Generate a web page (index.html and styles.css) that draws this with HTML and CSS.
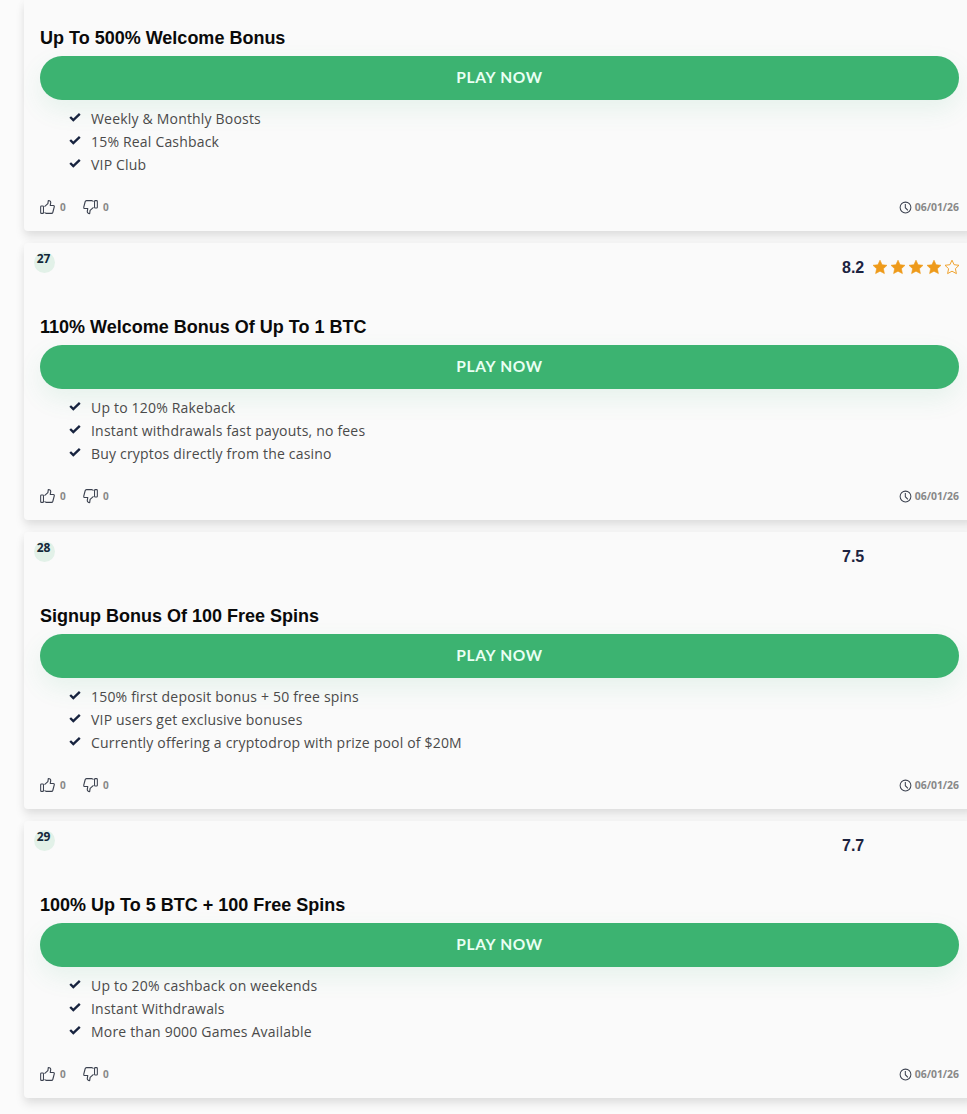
FILE: index.html
```html
<!DOCTYPE html>
<html lang="en">
<head>
<meta charset="utf-8">
<title>Casino list</title>
<link rel="stylesheet" href="styles.css">
</head>
<body>
<svg class="defs" width="0" height="0" aria-hidden="true">
  <defs>
    <symbol id="check" viewBox="0 0 12 10"><path d="M1.200 5 4.300 8 10.800 1.800" fill="none" stroke="currentColor" stroke-width="2.400"/></symbol>
    <symbol id="thumb" viewBox="0 0 16 16"><rect x="0.700" y="7" width="3" height="7.800" rx="0.800" fill="none" stroke="currentColor" stroke-width="1.100"/><path d="M4.800 7.600 8.400 4.400 8.900 1c1.700 0 2.700 1.100 2.500 2.700L10.900 6.400h3.300c.8 0 1.200.7 1 1.400l-1.500 5.800c-.2.700-.7 1.200-1.400 1.200H6.400l-1.600-.9" fill="none" stroke="currentColor" stroke-width="1.200" stroke-linejoin="round"/></symbol>
    <symbol id="clock" viewBox="0 0 14 14"><circle cx="7" cy="7" r="5.800" fill="none" stroke="currentColor" stroke-width="1.100"/><path d="M6.800 3.200V7.200L9.600 10" fill="none" stroke="currentColor" stroke-width="1.100"/></symbol>
    <symbol id="star" viewBox="0 0 16 16"><path d="M8 1.200l2.100 4.500 4.900.6-3.600 3.400 1 4.900L8 12.200l-4.400 2.400 1-4.900L1 6.300l4.900-.6z"/></symbol>
  </defs>
</svg>
<main class="list">
  <article class="card card-cut">
    <h2 class="title">Up To 500% Welcome Bonus</h2>
    <a class="play" href="#">PLAY NOW</a>
    <ul class="perks">
      <li><svg class="check"><use href="#check"/></svg>Weekly &amp; Monthly Boosts</li>
      <li><svg class="check"><use href="#check"/></svg>15% Real Cashback</li>
      <li><svg class="check"><use href="#check"/></svg>VIP Club</li>
    </ul>
    <footer class="foot">
      <span class="vote"><svg class="thumb"><use href="#thumb"/></svg>0</span>
      <span class="vote"><svg class="thumb down"><use href="#thumb"/></svg>0</span>
      <span class="date"><svg class="clock"><use href="#clock"/></svg>06/01/26</span>
    </footer>
  </article>
  <article class="card">
    <header class="head">
      <span class="rank">27</span>
      <div class="rating"><span class="score">8.2</span>
        <span class="stars">
          <svg class="star"><use href="#star"/></svg><svg class="star"><use href="#star"/></svg><svg class="star"><use href="#star"/></svg><svg class="star"><use href="#star"/></svg><svg class="star empty"><use href="#star"/></svg>
        </span>
      </div>
    </header>
    <h2 class="title">110% Welcome Bonus Of Up To 1 BTC</h2>
    <a class="play" href="#">PLAY NOW</a>
    <ul class="perks">
      <li><svg class="check"><use href="#check"/></svg>Up to 120% Rakeback</li>
      <li><svg class="check"><use href="#check"/></svg>Instant withdrawals fast payouts, no fees</li>
      <li><svg class="check"><use href="#check"/></svg>Buy cryptos directly from the casino</li>
    </ul>
    <footer class="foot">
      <span class="vote"><svg class="thumb"><use href="#thumb"/></svg>0</span>
      <span class="vote"><svg class="thumb down"><use href="#thumb"/></svg>0</span>
      <span class="date"><svg class="clock"><use href="#clock"/></svg>06/01/26</span>
    </footer>
  </article>
  <article class="card">
    <header class="head">
      <span class="rank">28</span>
      <div class="rating"><span class="score">7.5</span><span class="stars"></span></div>
    </header>
    <h2 class="title">Signup Bonus Of 100 Free Spins</h2>
    <a class="play" href="#">PLAY NOW</a>
    <ul class="perks">
      <li><svg class="check"><use href="#check"/></svg>150% first deposit bonus + 50 free spins</li>
      <li><svg class="check"><use href="#check"/></svg>VIP users get exclusive bonuses</li>
      <li><svg class="check"><use href="#check"/></svg>Currently offering a cryptodrop with prize pool of $20M</li>
    </ul>
    <footer class="foot">
      <span class="vote"><svg class="thumb"><use href="#thumb"/></svg>0</span>
      <span class="vote"><svg class="thumb down"><use href="#thumb"/></svg>0</span>
      <span class="date"><svg class="clock"><use href="#clock"/></svg>06/01/26</span>
    </footer>
  </article>
  <article class="card">
    <header class="head">
      <span class="rank">29</span>
      <div class="rating"><span class="score">7.7</span><span class="stars"></span></div>
    </header>
    <h2 class="title">100% Up To 5 BTC + 100 Free Spins</h2>
    <a class="play" href="#">PLAY NOW</a>
    <ul class="perks">
      <li><svg class="check"><use href="#check"/></svg>Up to 20% cashback on weekends</li>
      <li><svg class="check"><use href="#check"/></svg>Instant Withdrawals</li>
      <li><svg class="check"><use href="#check"/></svg>More than 9000 Games Available</li>
    </ul>
    <footer class="foot">
      <span class="vote"><svg class="thumb"><use href="#thumb"/></svg>0</span>
      <span class="vote"><svg class="thumb down"><use href="#thumb"/></svg>0</span>
      <span class="date"><svg class="clock"><use href="#clock"/></svg>06/01/26</span>
    </footer>
  </article>
</main>
</body>
</html>
```
FILE: styles.css
```css
* { box-sizing: border-box; }
html, body { margin: 0; padding: 0; }
body {
  width: 967px;
  height: 1114px;
  overflow: hidden;
  background: #fbfbfb;
  font-family: "Open Sans", sans-serif;
}
.defs { display: block; height: 0; }
.list {
  display: flex;
  flex-direction: column;
  gap: 12px;
  width: 951px;
  margin-left: 24px;
}
.card {
  flex: none;
  height: 277px;
  padding: 0 16px;
  background: #fafafa;
  border-radius: 4px;
  box-shadow: 0 6px 10px rgba(0, 0, 0, 0.1), 0 0 10px rgba(0, 0, 0, 0.03);
}
.card-cut { height: 231px; padding-top: 27px; border-radius: 0 0 4px 4px; }
.head {
  display: flex;
  justify-content: space-between;
  height: 73px;
}
.rank {
  width: 21px;
  height: 21px;
  margin: 9px 0 0 -6px;
  border-radius: 50%;
  background: #e2f1e8;
  color: #12283a;
  font-size: 12px;
  font-weight: 700;
  line-height: 14px;
  letter-spacing: -0.2px;
  text-indent: -2px;
  text-align: center;
}
.rating {
  display: flex;
  gap: 8px;
  width: 117px;
  height: 18px;
  margin-top: 16px;
}
.score {
  color: #1c2340;
  font: 700 16px/18px "Liberation Sans", sans-serif;
}
.stars { display: flex; gap: 2px; }
.star { width: 16px; height: 16px; fill: #ee9a1a; stroke: #ee9a1a; stroke-width: 0.600; }
.star.empty { fill: none; stroke-width: 0.900; }
.title {
  margin: 0;
  height: 22px;
  color: #0a0a0a;
  font: 700 18px/22px "Liberation Sans", sans-serif;
}
.play {
  display: block;
  height: 44px;
  margin-top: 7px;
  border-radius: 22px;
  background: #3cb371;
  box-shadow: 0 10px 24px rgba(60, 179, 113, 0.1);
  color: #e9fff3;
  font: 700 15.500px/43px Lato, sans-serif;
  letter-spacing: 0.7px;
  text-align: center;
  text-decoration: none;
}
.perks {
  margin: 7px 0 0;
  padding: 0 0 0 29px;
  list-style: none;
  color: #4a4a4a;
  font-size: 14px;
  letter-spacing: 0.19px;
  line-height: 23px;
}
.perks li { display: flex; align-items: flex-start; height: 23px; }
.check { flex: none; width: 12px; height: 10px; margin: 5px 10px 0 0; color: #17233f; }
.foot {
  display: flex;
  align-items: center;
  height: 16px;
  margin-top: 23px;
  color: #888;
  font-size: 10px;
  font-weight: 700;
}
.vote { display: flex; align-items: center; gap: 5px; width: 43px; }
.thumb { width: 15px; height: 16px; color: #3c4250; }
.thumb.down { transform: rotate(180deg); }
.date {
  display: flex;
  align-items: center;
  gap: 3px;
  margin-left: auto;
  font-size: 10.400px;
}
.clock { width: 13px; height: 13px; color: #3c4250; }
```
